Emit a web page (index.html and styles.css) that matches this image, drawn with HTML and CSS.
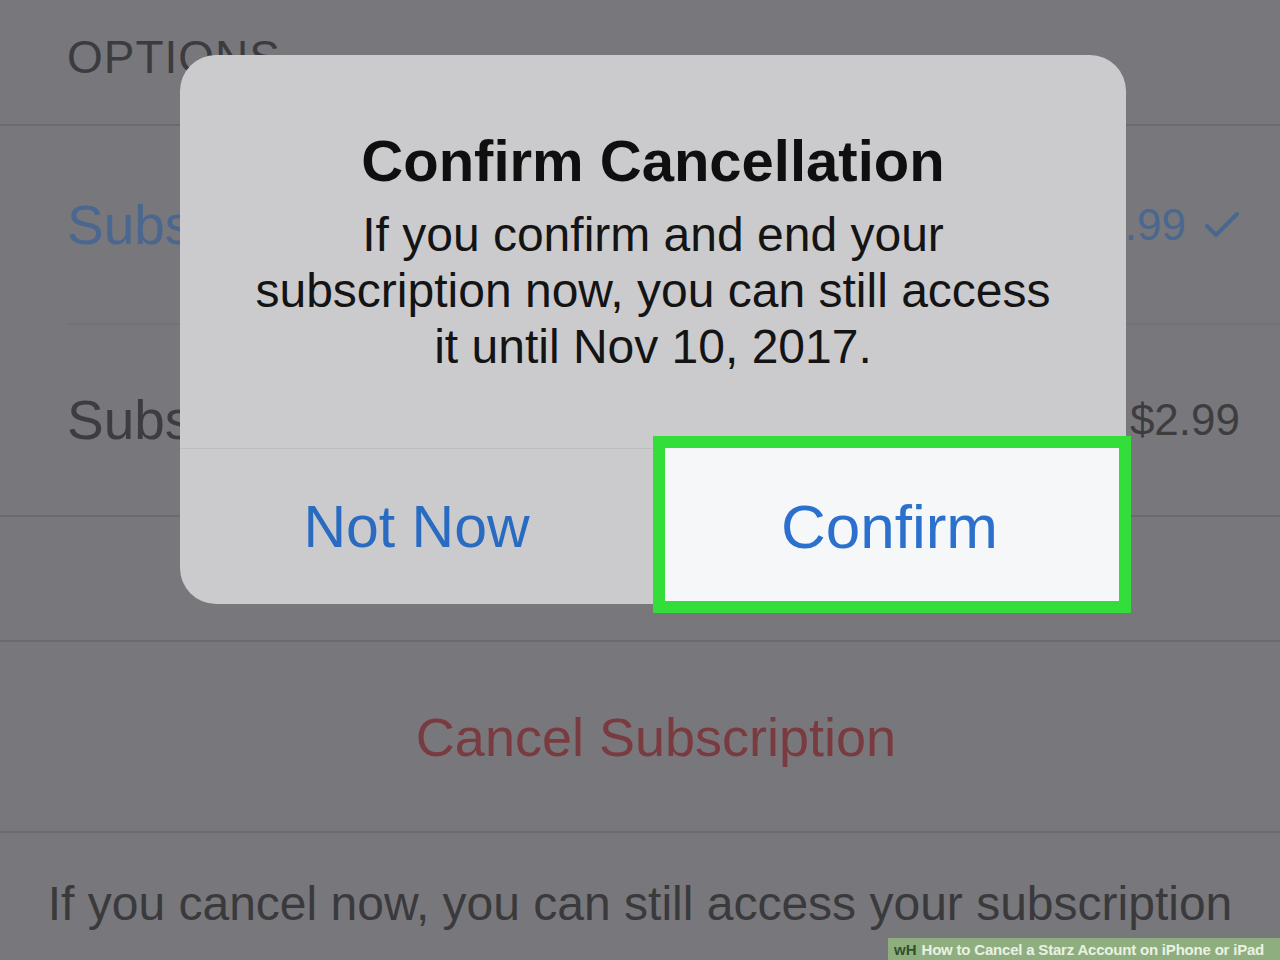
FILE: index.html
```html
<!DOCTYPE html>
<html lang="en">
<head>
<meta charset="UTF-8" />
<meta name="viewport" content="width=device-width, initial-scale=1.0">
<title>Confirm Cancellation</title>
<link rel="stylesheet" href="styles.css">
</head>
<body>

<main class="screen">
  <header class="section-head">OPTIONS</header>

  <section class="group">
    <div class="row">
      <div class="row-body">
        <span class="label label-selected">Subscription</span>
        <span class="price price-selected">
          $2.99
          <svg class="check" viewBox="0 0 36 28" width="36" height="28" aria-hidden="true">
            <polyline points="3,15 12,24 33,3" fill="none" stroke="currentColor" stroke-width="4" stroke-linecap="round" stroke-linejoin="round" />
          </svg>
        </span>
      </div>
    </div>
    <div class="row">
      <div class="row-body">
        <span class="label">Subscription</span>
        <span class="price">$2.99</span>
      </div>
    </div>
  </section>

  <section class="group group-action">
    <div class="row row-action">Cancel Subscription</div>
  </section>

  <p class="footer-note">If you cancel now, you can still access your subscription</p>
</main>

<div class="alert" role="alertdialog" aria-labelledby="alertTitle">
  <div class="alert-content">
    <h2 id="alertTitle">Confirm Cancellation</h2>
    <p>If you confirm and end your subscription now, you can still access it until Nov 10, 2017.</p>
  </div>
  <div class="alert-actions">
    <button class="alert-btn">Not Now</button>
    <button class="alert-btn alert-btn-confirm">Confirm</button>
  </div>
</div>

<div class="watermark">
  <span class="watermark-logo">wH</span>
  <span class="watermark-text">How to Cancel a Starz Account on iPhone or iPad</span>
</div>

</body>
</html>
```

FILE: styles.css
```css
* {
  box-sizing: border-box;
}
html, body {
  margin: 0;
  padding: 0;
}
body {
  font-family: 'Liberation Sans', Arial, sans-serif;
  background: #78777b;
  color: #3b3b3e;
  width: 1280px;
  height: 960px;
  overflow: hidden;
  position: relative;
}

/* background settings list */
.screen {
  display: flex;
  flex-direction: column;
}
.section-head {
  height: 126px;
  padding: 31px 0 0 67px;
  font-size: 46px;
  line-height: 52px;
  letter-spacing: 1px;
  color: #3c3c3f;
  border-bottom: 2px solid #6b6a6f;
}
.group {
  display: flex;
  flex-direction: column;
  border-bottom: 2px solid #6b6a6f;
}
.row {
  padding-left: 67px;
}
.row-body {
  display: flex;
  align-items: center;
  justify-content: space-between;
  height: 199px;
  padding-right: 40px;
  border-bottom: 2px solid #727176;
}
.row:last-child .row-body {
  border-bottom: none;
  height: 190px;
}
.label {
  font-size: 55px;
  color: #3d3d40;
  white-space: nowrap;
}
.label-selected {
  color: #4a678f;
}
.price {
  display: flex;
  align-items: center;
  gap: 18px;
  font-size: 44px;
  color: #3d3d40;
}
.price-selected {
  color: #4a678f;
}
.check {
  display: block;
  width: 36px;
  height: 28px;
}
.group-action {
  margin-top: 123px;
  border-top: 2px solid #6b6a6f;
}
.row-action {
  height: 189px;
  padding: 0 0 0 32px;
  display: flex;
  align-items: center;
  justify-content: center;
  font-size: 54px;
  color: #7a3b40;
}
.footer-note {
  margin: 0;
  padding-top: 43px;
  text-align: center;
  font-size: 48px;
  line-height: 56px;
  color: #3a3a3d;
  white-space: nowrap;
}

/* alert dialog */
.alert {
  position: absolute;
  top: 55px;
  left: 180px;
  width: 946px;
  background: #cbcbcd;
  border-radius: 36px;
  color: #111;
}
.alert-content {
  padding: 73px 64px 73px;
  text-align: center;
}
.alert-content h2 {
  margin: 0;
  font-size: 58px;
  line-height: 66px;
  font-weight: 700;
  color: #0f0f0f;
}
.alert-content p {
  margin: 13px 0 0;
  font-size: 48px;
  line-height: 56px;
  color: #141414;
}
.alert-actions {
  display: grid;
  grid-template-columns: 1fr 1fr;
  border-top: 1px solid #bdbdc0;
}
.alert-btn {
  height: 155px;
  border: none;
  background: transparent;
  font-family: inherit;
  font-size: 59px;
  color: #2a6bc2;
  cursor: pointer;
  padding: 0;
}
.alert-btn-confirm {
  position: relative;
  isolation: isolate;
  font-size: 62px;
  color: #2a70cc;
}
.alert-btn-confirm::before {
  content: "";
  position: absolute;
  top: -13px;
  left: 0;
  right: -5px;
  bottom: -9px;
  border: 12px solid #33dd3a;
  background: #f6f7f9;
  z-index: -1;
}

/* watermark strip */
.watermark {
  position: absolute;
  right: 0;
  bottom: 0;
  width: 392px;
  height: 22px;
  display: flex;
  align-items: center;
  gap: 5px;
  padding-left: 6px;
  background: #8fae7f;
  font-family: 'Liberation Sans', Arial, sans-serif;
  font-size: 15px;
  font-weight: 700;
  white-space: nowrap;
}
.watermark-logo {
  color: #33502a;
}
.watermark-text {
  color: #e9f2e2;
  letter-spacing: -0.2px;
}
```
